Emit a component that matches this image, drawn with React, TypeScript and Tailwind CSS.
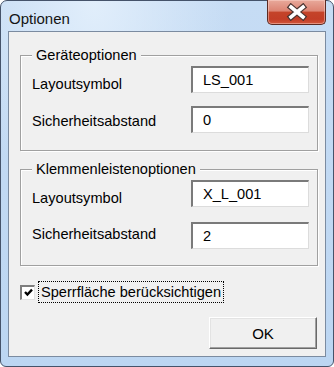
import React from 'react';

const font = "font-['Liberation_Sans',Arial,sans-serif]";

interface Row {
  label: string;
  value: string;
  rowTop: string;
  labelTop: string;
}

function Field({ value }: { value: string }) {
  return (
    <div className="w-[118px] h-[27px] flex items-center pl-[10px] bg-white border-t-2 border-l-2 border-r border-b border-t-[#7a7a7a] border-l-[#7a7a7a] border-r-[#dcdcdc] border-b-[#dcdcdc] text-black leading-[17px]">
      {value}
    </div>
  );
}

function Group({ title, rows, height }: { title: string; rows: Row[]; height: string }) {
  return (
    <div
      className={`relative ml-[11px] w-[298px] ${height} border border-[#a0a0a0] shadow-[inset_1px_1px_0_#ffffff,1px_1px_0_#ffffff]`}
    >
      <span className="absolute top-[-9px] left-[11px] px-[4px] bg-[#f0f0f0] leading-[17px] text-black">{title}</span>
      {rows.map((r) => (
        <div key={r.label + r.value} className={`flex items-start ${r.rowTop}`}>
          <div className={`w-[170px] pl-[11px] leading-[17px] text-black ${r.labelTop}`}>{r.label}</div>
          <Field value={r.value} />
        </div>
      ))}
    </div>
  );
}

function CloseIcon() {
  return (
    <svg width="22" height="18" viewBox="0 0 22 18">
      <path d="M5 4 L17 14 M17 4 L5 14" stroke="#4a3330" strokeWidth="6" strokeLinecap="square" fill="none" />
      <path d="M5 4 L17 14 M17 4 L5 14" stroke="#ffffff" strokeWidth="3.6" strokeLinecap="square" fill="none" />
    </svg>
  );
}

export default function App() {
  return (
    <div
      className={`${font} text-[14.6px] relative w-[334px] h-[367px] border border-[#45536a] rounded-t-[7px] rounded-b-[6px] bg-[radial-gradient(ellipse_at_28%_0%,#e1eefb_0%,rgba(225,238,251,0)_40%),linear-gradient(to_bottom,#c6dcf4,#bcd6f2)] flex flex-col`}
    >
      <div className="h-[30px] pl-[8px] pt-[9px] text-[15px] leading-[17px] text-[#141414]">Optionen</div>

      <div className="absolute top-[-1px] right-[7px] w-[59px] h-[25px] rounded-b-[5px] border border-[#5b2a22] border-t-0 bg-[linear-gradient(to_bottom,#e8a99b_0%,#dc8473_45%,#c44329_52%,#c23d26_80%,#d2573d_100%)] shadow-[inset_0_0_0_1px_rgba(255,220,210,0.45)] flex items-center justify-center">
        <CloseIcon />
      </div>

      <div className="mx-[7px] h-[326px] border border-[#7b8ba0] bg-[#f0f0f0] flex flex-col">
        <div className="mt-[23px]">
          <Group
            title="Geräteoptionen"
            height="h-[96px]"
            rows={[
              { label: 'Layoutsymbol', value: 'LS_001', rowTop: 'mt-[10px]', labelTop: 'mt-[10px]' },
              { label: 'Sicherheitsabstand', value: '0', rowTop: 'mt-[13px]', labelTop: 'mt-[7px]' },
            ]}
          />
        </div>
        <div className="mt-[18px]">
          <Group
            title="Klemmenleistenoptionen"
            height="h-[97px]"
            rows={[
              { label: 'Layoutsymbol', value: 'X_L_001', rowTop: 'mt-[10px]', labelTop: 'mt-[10px]' },
              { label: 'Sicherheitsabstand', value: '2', rowTop: 'mt-[15px]', labelTop: 'mt-[4px]' },
            ]}
          />
        </div>

        <div className="mt-[15px] ml-[11px] flex items-center h-[22px]">
          <div className="w-[15px] h-[15px] bg-white border-t-2 border-l-2 border-r border-b border-t-[#7e7e7e] border-l-[#7e7e7e] border-r-[#e3e3e3] border-b-[#e3e3e3] flex items-center justify-center">
            <svg width="9" height="9" viewBox="0 0 9 9">
              <path d="M1 4 L3.4 6.6 L8 1.6" stroke="#000000" strokeWidth="2.3" fill="none" />
            </svg>
          </div>
          <div className="ml-[3px] h-[22px] border border-dotted border-black pl-[2px] pr-[2px] flex items-center leading-[17px] text-black">
            Sperrfläche berücksichtigen
          </div>
        </div>

        <button className="mt-[14px] ml-[200px] w-[108px] h-[32px] bg-[#f0f0f0] border border-t-white border-l-white border-r-[#696969] border-b-[#696969] shadow-[inset_-1px_-1px_0_#a0a0a0,inset_1px_1px_0_#e3e3e3] text-[15px] text-black leading-[17px]">
          OK
        </button>
      </div>
    </div>
  );
}
